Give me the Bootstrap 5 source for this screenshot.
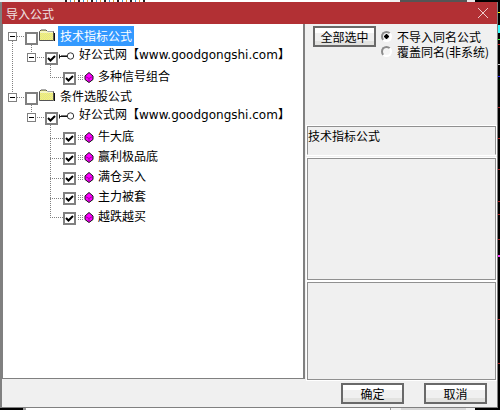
<!DOCTYPE html>
<html lang="zh">
<head>
<meta charset="utf-8">
<title>导入公式</title>
<link rel="stylesheet" href="https://cdn.jsdelivr.net/npm/bootstrap@5.3.0/dist/css/bootstrap.min.css">
<style>
html,body{width:500px;height:410px;overflow:hidden;margin:0;background:#000;}
body{font:12px/20px "DejaVu Sans","Noto Sans CJK SC",sans-serif;color:#000;}
.cjk{font-family:"Noto Sans CJK SC",sans-serif;}
.strip{height:2px;}
.seg{height:2px;display:block;}
.w23{width:23px;background:#000}.w3g{width:3px;background:#999}.w364{width:364px;background:#fff}
.w1g{width:1px;background:#999}.w10{width:10px;background:#f0f0f0}.w65{width:65px;background:#d8d8d8}
.w9{width:9px;background:#f0f0f0}.wrest{flex:1;background:#000}
.w65t{width:65px;background:#f4f4f4}
.w80f{width:80px;background:repeating-linear-gradient(90deg,#222 0 2px,#fff 2px 5px,#39c 5px 6px,#fff 6px 9px,#c93 9px 10px,#fff 10px 13px);}
.w245{width:245px;background:#fff}.w67{width:67px;background:#555}.w8{width:8px;background:#e8e8e8}
.mid{height:406px;}
.win{width:498px;height:406px;background:#f0f0f0;border:solid #808080;border-width:0 1px 1px 2px;flex:none;}
.ticks{width:2px;height:406px;flex:none;display:block;}
.ttl{height:22px;background:#b23034;color:#f0e4e4;padding:0 4px;line-height:21px;flex:none;}
.ttl svg{width:10px;height:10px;margin-right:5px;}
.body-wrap{height:355px;flex:none;}
.tree{width:303px;background:#fff;border:solid #808080;border-width:0 2px 1px 1px;padding-top:4px;flex:none;position:relative;}
.tree-lines{position:absolute;left:-3px;top:-24px;width:310px;height:355px;pointer-events:none;}
.tr{height:20px;}
.l0{padding-left:5px;}.l1{padding-left:24px;}.l2{padding-left:60px;}
.exp{width:9px;height:9px;border:1px solid #808080;background:#fff;flex:none;margin-top:4px;display:flex;align-items:center;justify-content:center;}
.exp::before{content:"";width:5px;height:1px;background:#000;display:block;}
.l1 .exp{margin-top:5px;}
.l0.r2 .exp{margin-top:5px;}
input.tick.form-check-input{width:13px;height:13px;flex:none;margin:4px 0 0 8px;border:2px solid #808080;border-radius:0;background-color:#fff;box-shadow:none;float:none;}
.l1 input.tick.form-check-input{margin-left:9px;}
.l2 input.tick.form-check-input{margin-left:0;}
input.tick.form-check-input:checked{background-color:#fff;border-color:#808080;background-size:9px 9px;background-position:center;background-repeat:no-repeat;background-image:url("data:image/svg+xml,%3Csvg xmlns='http://www.w3.org/2000/svg' viewBox='0 0 9 9'%3E%3Cpath d='M1 4l2.5 2.5L8 2' fill='none' stroke='%23000' stroke-width='2'/%3E%3C/svg%3E");}
.ico-f{width:16px;height:12px;margin:1px 0 0 1px;flex:none;}
.ico-k{width:16px;height:9px;margin:4px 0 0 1px;flex:none;}
.ico-d{width:17px;height:11px;margin:4px 0 0 1px;flex:none;}
.lbl{height:20px;line-height:19px;padding:0 2px;margin:-2px 0 0 2px;white-space:nowrap;}
.l0 .lbl{margin-left:3px;}
.l2 .lbl{margin-left:2px;}
.lbl.sel{background:#3399ff;color:#fff;}
.side{flex:1;padding:0 1px 0 2px;min-width:0;}
.side-top{height:102px;flex:none;padding:2px 0 0 6px;}
.btn.w-btn{width:63px;height:21px;padding:0;border:2px solid #696969;border-radius:0;font:12px/17px "Noto Sans CJK SC",sans-serif;color:#000;background:linear-gradient(#fff 0 5px,#f0f0f0 5px 13px,#e2e2e0 13px);flex:none;}
.radios{padding:3px 0 0 5px;}
.rd{height:15px;line-height:15px;}
.rd-t{display:block;height:15px;line-height:15px;}
input.rad.form-check-input{width:11px;height:11px;margin:0 5px 0 0;float:none;flex:none;border:2px solid;border-color:#8c8c8c #fff #fff #8c8c8c;border-radius:50%;background-color:#f4f4f4;box-shadow:none;}
input.rad.form-check-input:checked{background-color:#f4f4f4;background-image:radial-gradient(circle,#000 0 2px,transparent 2.4px);border-color:#8c8c8c #fff #fff #8c8c8c;}
.gb{border:1px solid #909090;outline:1px solid #fff;outline-offset:0;flex:none;}
.gb1{height:29px;padding:0;line-height:17px;margin-bottom:3px;border-bottom-color:#f0f0f0;}
.gb2{height:122px;margin-bottom:2px;}
.gb3{height:98px;}
.foot{height:27px;flex:none;padding:4px 10px 0 0;gap:20px;}
</style>
</head>
<body>
<div class="strip d-flex">
  <span class="seg w65t"></span><span class="seg w80f"></span><span class="seg w245"></span><span class="seg w10"></span><span class="seg w67"></span><span class="seg w8"></span><span class="seg wrest"></span>
</div>
<div class="mid d-flex">
  <div class="win d-flex flex-column">
    <div class="ttl d-flex justify-content-between align-items-center">
      <span class="cjk">导入公式</span>
      <svg viewBox="0 0 10 10"><path d="M0 0L10 10M10 0L0 10" stroke="#ecc" stroke-width="1" fill="none"/></svg>
    </div>
    <div class="body-wrap d-flex">
      <div class="tree">
        <svg class="tree-lines" viewBox="0 0 310 355" aria-hidden="true">
          <g stroke="#808080" stroke-width="1" stroke-dasharray="1 1" fill="none" shape-rendering="crispEdges">
            <path d="M12.5 41V93M17 36.5H25M17 97.5H25"/>
            <path d="M31.5 45V53M35 57.5H45M50.5 65V77.5H63"/>
            <path d="M31.5 105V113M35 117.5H45M50.5 125V217.5M50 138.5H63M50 158.5H63M50 178.5H63M50 198.5H63M50 217.5H63"/>
          </g>
        </svg>
        <div class="tr l0 d-flex align-items-start">
          <span class="exp"></span><input class="tick form-check-input" type="checkbox" aria-label="技术指标公式">
          <svg class="ico-f" viewBox="0 0 16 12"><use href="#folder"/></svg><span class="lbl sel cjk">技术指标公式</span>
        </div>
        <div class="tr l1 d-flex align-items-start">
          <span class="exp"></span><input class="tick form-check-input" type="checkbox" checked aria-label="好公式网">
          <svg class="ico-k" viewBox="0 0 16 9"><use href="#key"/></svg><span class="lbl">好公式网【www.goodgongshi.com】</span>
        </div>
        <div class="tr l2 d-flex align-items-start">
          <input class="tick form-check-input" type="checkbox" checked aria-label="多种信号组合">
          <svg class="ico-d" viewBox="0 0 17 11"><use href="#gem"/></svg><span class="lbl cjk">多种信号组合</span>
        </div>
        <div class="tr l0 r2 d-flex align-items-start">
          <span class="exp"></span><input class="tick form-check-input" type="checkbox" aria-label="条件选股公式">
          <svg class="ico-f" viewBox="0 0 16 12"><use href="#folder"/></svg><span class="lbl cjk">条件选股公式</span>
        </div>
        <div class="tr l1 d-flex align-items-start">
          <span class="exp"></span><input class="tick form-check-input" type="checkbox" checked aria-label="好公式网">
          <svg class="ico-k" viewBox="0 0 16 9"><use href="#key"/></svg><span class="lbl">好公式网【www.goodgongshi.com】</span>
        </div>
        <div class="tr l2 d-flex align-items-start"><input class="tick form-check-input" type="checkbox" checked aria-label="牛大底"><svg class="ico-d" viewBox="0 0 17 11"><use href="#gem"/></svg><span class="lbl cjk">牛大底</span></div>
        <div class="tr l2 d-flex align-items-start"><input class="tick form-check-input" type="checkbox" checked aria-label="赢利极品底"><svg class="ico-d" viewBox="0 0 17 11"><use href="#gem"/></svg><span class="lbl cjk">赢利极品底</span></div>
        <div class="tr l2 d-flex align-items-start"><input class="tick form-check-input" type="checkbox" checked aria-label="满仓买入"><svg class="ico-d" viewBox="0 0 17 11"><use href="#gem"/></svg><span class="lbl cjk">满仓买入</span></div>
        <div class="tr l2 d-flex align-items-start"><input class="tick form-check-input" type="checkbox" checked aria-label="主力被套"><svg class="ico-d" viewBox="0 0 17 11"><use href="#gem"/></svg><span class="lbl cjk">主力被套</span></div>
        <div class="tr l2 d-flex align-items-start"><input class="tick form-check-input" type="checkbox" checked aria-label="越跌越买"><svg class="ico-d" viewBox="0 0 17 11"><use href="#gem"/></svg><span class="lbl cjk">越跌越买</span></div>
      </div>
      <div class="side d-flex flex-column">
        <div class="side-top d-flex align-items-start">
          <button type="button" class="btn w-btn">全部选中</button>
          <div class="radios cjk">
            <div class="rd d-flex align-items-center"><input class="rad form-check-input" type="radio" name="m" checked aria-label="不导入同名公式"><span class="rd-t">不导入同名公式</span></div>
            <div class="rd d-flex align-items-center"><input class="rad form-check-input" type="radio" name="m" aria-label="覆盖同名(非系统)"><span class="rd-t">覆盖同名(非系统)</span></div>
          </div>
        </div>
        <div class="gb gb1 cjk">技术指标公式</div>
        <div class="gb gb2"></div>
        <div class="gb gb3"></div>
      </div>
    </div>
    <div class="foot d-flex justify-content-end">
      <button type="button" class="btn w-btn">确定</button>
      <button type="button" class="btn w-btn">取消</button>
    </div>
  </div>
  <svg class="ticks" viewBox="0 2 2 406" aria-hidden="true" shape-rendering="crispEdges">
    <rect y="12" width="2" height="1" fill="#ff0"/><rect y="25" width="2" height="8" fill="#3ff"/><rect y="39" width="2" height="1" fill="#3f3"/><rect y="44" width="2" height="1" fill="#c22"/><rect y="64" width="2" height="1" fill="#ccc"/><rect y="76" width="2" height="1" fill="#22f"/>
    <path d="M0 107.5H2M0 138.5H2M0 169.5H2M0 201.5H2M0 214.5H2M0 239.5H2M0 319.5H2M0 363.5H2" stroke="#a22"/><rect y="255" width="2" height="2" fill="#f3f"/>
  </svg>
</div>
<div class="strip d-flex">
  <span class="seg w23"></span><span class="seg w3g"></span><span class="seg w364"></span><span class="seg w1g"></span><span class="seg w10"></span><span class="seg w65"></span><span class="seg w9"></span><span class="seg wrest"></span>
</div>
<svg width="0" height="0" class="d-block" aria-hidden="true">
  <defs>
    <pattern id="dith" width="2" height="2" patternUnits="userSpaceOnUse"><rect width="2" height="2" fill="#ffff66"/><rect width="1" height="1" fill="#d8d8a0"/><rect x="1" y="1" width="1" height="1" fill="#d8d8a0"/></pattern>
    <symbol id="folder" viewBox="0 0 16 12">
      <path d="M0.5 11.5V2.5L2 1H7L8.5 2.5H14.5V11.5Z" fill="url(#dith)" stroke="#555"/>
      <path d="M1 3H14" stroke="#fff"/><path d="M15.5 4V12.5H2" stroke="#111" fill="none"/>
    </symbol>
    <symbol id="key" viewBox="0 0 16 9">
      <path d="M0.5 2.5V6.5M1 4.5H9" stroke="#111" fill="none"/><path d="M2 3.5H8" stroke="#777"/>
      <circle cx="11.5" cy="4" r="3.2" fill="#fff" stroke="#333"/>
    </symbol>
    <symbol id="gem" viewBox="0 0 17 11">
      <path d="M1 3.5H6M1 5.5H6M1 7.5H6" stroke="#888" stroke-dasharray="1 1"/>
      <path d="M12 0.5L16 4V7.5L12 10.5L8 7.5V4Z" fill="#f0f" stroke="#111"/>
      <path d="M8.5 4.5L12 6.5L15.5 4.5M12 6.5V10" stroke="#a000a0" fill="none"/>
    </symbol>
  </defs>
</svg>
<script src="https://cdn.jsdelivr.net/npm/bootstrap@5.3.0/dist/js/bootstrap.bundle.min.js"></script>
</body>
</html>
